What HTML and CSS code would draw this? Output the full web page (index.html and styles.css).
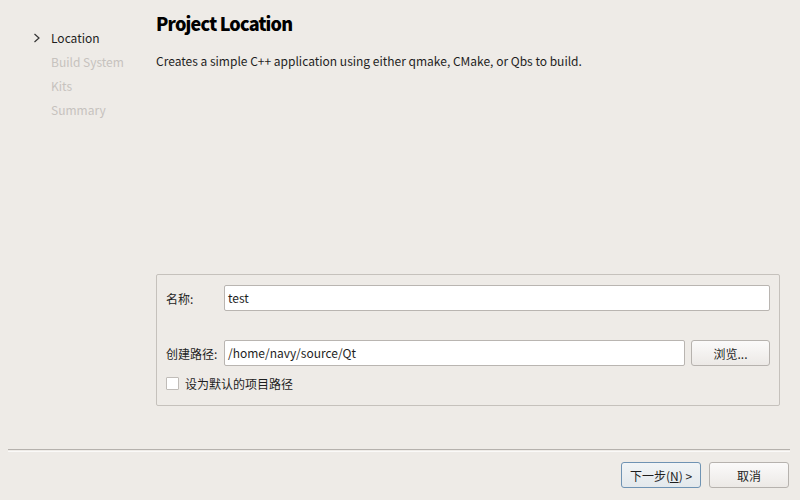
FILE: index.html
```html
<!DOCTYPE html>
<html>
<head>
<meta charset="utf-8">
<link rel="stylesheet" href="styles.css">
</head>
<body>
<div class="wizard">
  <div class="main">
    <ul class="steps">
      <li class="step current"><span class="chev"><svg width="8" height="10" viewBox="0 0 8 10"><path d="M1.5 1 L6 5 L1.5 9" fill="none" stroke="#333" stroke-width="1.2"/></svg></span>Location</li>
      <li class="step">Build System</li>
      <li class="step">Kits</li>
      <li class="step">Summary</li>
    </ul>
    <div class="content">
      <h1 class="title">Project Location</h1>
      <p class="desc">Creates a simple C++ application using either qmake, CMake, or Qbs to build.</p>
      <div class="spacer"></div>
      <div class="group">
        <div class="row">
          <span class="label">名称:</span>
          <div class="input">test</div>
        </div>
        <div class="row row-path">
          <span class="label">创建路径:</span>
          <div class="input">/home/navy/source/Qt</div>
          <button class="btn browse">浏览...</button>
        </div>
        <label class="check"><span class="box"></span>设为默认的项目路径</label>
      </div>
    </div>
  </div>
  <div class="sep"></div>
  <div class="footer">
    <button class="btn btn-default">下一步(<u>N</u>) &gt;</button>
    <button class="btn">取消</button>
  </div>
</div>
</body>
</html>
```
FILE: styles.css
```css
html, body {
  margin: 0;
  padding: 0;
  background: #eeebe7;
}
body {
  font-family: "Noto Sans CJK SC", "Noto Sans", sans-serif;
  font-size: 12px;
  color: #1e1e1e;
}
.wizard {
  width: 800px;
  height: 500px;
  display: flex;
  flex-direction: column;
}
.main {
  display: flex;
  height: 449px;
}
.steps {
  list-style: none;
  margin: 0;
  padding: 28px 0 0 33px;
  width: 123px;
  box-sizing: content-box;
}
.step {
  height: 24px;
  line-height: 20px;
  padding-left: 18px;
  color: #c6c2be;
  position: relative;
}
.step.current {
  color: #1e1e1e;
}
.chev {
  position: absolute;
  left: 0;
  top: 5px;
  width: 8px;
  height: 10px;
  display: flex;
}
.content {
  flex: 1;
  display: flex;
  flex-direction: column;
  padding: 9px 20px 43px 0;
}
.title {
  margin: 0;
  font-size: 18px;
  font-weight: 900;
  line-height: 28px;
  color: #000;
  letter-spacing: -0.8px;
}
.desc {
  margin: 15px 0 0 0;
  line-height: 18px;
}
.spacer {
  flex: 1;
}
.group {
  border: 1px solid #c5c1bc;
  border-radius: 2px;
  height: 132px;
  box-sizing: border-box;
  padding: 10px 9px 0 9px;
  display: flex;
  flex-direction: column;
}
.row {
  display: flex;
  align-items: center;
  height: 26px;
}
.row-path {
  margin-top: 29px;
  gap: 6px;
}
.label {
  width: 58px;
  flex: none;
  white-space: nowrap;
}
.row-path .label {
  width: 52px;
}
.input {
  flex: 1;
  height: 26px;
  box-sizing: border-box;
  border: 1px solid #b9b5b1;
  border-radius: 2px;
  background: #fff;
  padding: 0 3px;
  line-height: 24px;
}
.btn {
  font-family: "Noto Sans CJK SC", "Noto Sans", sans-serif;
  font-size: 12px;
  color: #1e1e1e;
  height: 26px;
  width: 80px;
  box-sizing: border-box;
  border: 1px solid #b6b2ae;
  border-radius: 3px;
  background: linear-gradient(#fbfafa, #ece9e6);
  padding: 0;
}
.browse {
  width: 79px;
}
.check {
  display: flex;
  align-items: center;
  margin-top: 7px;
  height: 20px;
  gap: 6px;
}
.box {
  width: 13px;
  height: 13px;
  box-sizing: border-box;
  border: 1px solid #c0bcb8;
  background: #fff;
  border-radius: 1px;
}
.sep {
  margin: 0 10px 0 8px;
  height: 1px;
  border-top: 1px solid #b5b1ad;
  border-bottom: 1px solid #faf9f8;
}
.footer {
  display: flex;
  justify-content: flex-end;
  gap: 8px;
  padding: 10px 11px 0 0;
}
.btn-default {
  border-color: #6f93b3;
  background: linear-gradient(#f1f4f6, #e3e8ec);
}
```
